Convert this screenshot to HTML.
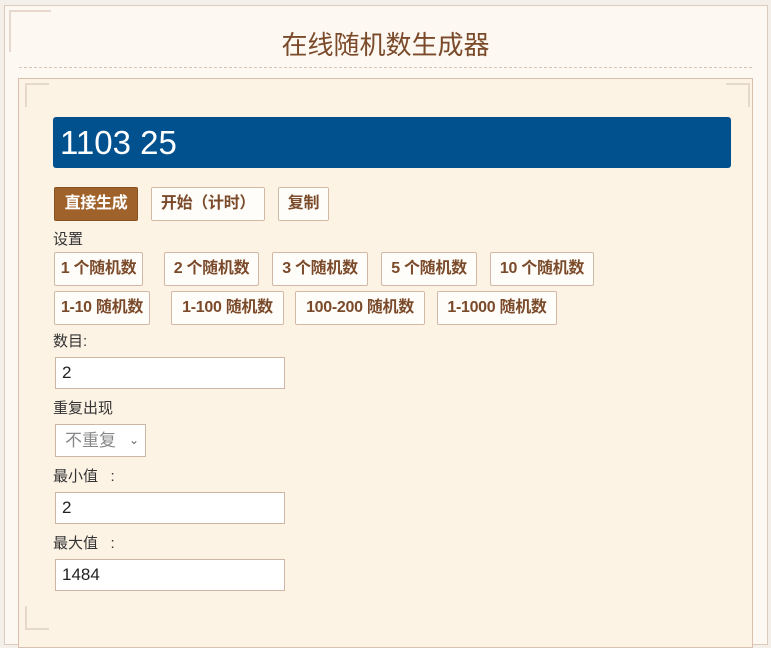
<!DOCTYPE html>
<html><head><meta charset="utf-8"><style>
*{box-sizing:border-box;margin:0;padding:0}
body{width:771px;height:638px;background:#f4efe9;font-family:"Liberation Sans","Noto Sans CJK SC",sans-serif;position:relative;overflow:hidden}
.outer{position:absolute;left:4px;top:5px;width:764px;height:640px;background:#fdf9f2;border:1px solid #dccbbd}
.title{position:absolute;left:0;top:25px;width:771px;text-align:center;font-size:26px;color:#7a4a2a}
.dash{position:absolute;left:19px;top:67px;width:733px;border-top:1px dashed #d8c6b6}
.inner{position:absolute;left:18px;top:78px;width:735px;height:570px;background:#fcf3e5;border:1px solid #d8bfae}
.bar{position:absolute;left:53px;top:117px;width:678px;height:51px;background:#02518f;border-radius:3px;color:#fff;font-size:33px;line-height:51px;padding-left:7px}
.b{position:absolute;height:34px;border:1px solid #d2b9a6;background:#fffdf9;color:#7a4a2a;font-weight:bold;font-size:16px;line-height:32px;text-align:center;border-radius:2px;white-space:nowrap;letter-spacing:-0.3px}
.lbl{position:absolute;left:53px;font-size:15px;color:#333}
.in{position:absolute;left:55px;width:230px;height:32px;background:#fff;border:1px solid #cdb6a4;font-size:17px;line-height:30px;padding-left:6px;color:#222}
.corner{position:absolute;width:24px;height:24px;border-left:2px solid #e6d8cc;border-top:2px solid #e6d8cc}
</style></head><body>
<div class="outer"></div>
<div class="corner" style="left:9px;top:10px;width:42px;height:42px"></div>
<div class="title">在线随机数生成器</div>
<div class="dash"></div>
<div class="inner"></div>
<div class="corner" style="left:25px;top:83px"></div>
<div class="corner" style="left:726px;top:83px;border-left:none;border-right:2px solid #e6d8cc"></div>
<div class="corner" style="left:25px;top:606px;border-top:none;border-bottom:2px solid #e6d8cc"></div>
<div class="bar">1103 25</div>
<div class="b" style="left:54px;top:187px;width:84px;background:#a0622b;color:#fff;border-color:#8a5020">直接生成</div>
<div class="b" style="left:151px;top:187px;width:114px">开始（计时）</div>
<div class="b" style="left:278px;top:187px;width:51px">复制</div>
<div class="lbl" style="top:228px">设置</div>
<div class="b" style="left:54px;top:252px;width:89px">1 个随机数</div>
<div class="b" style="left:164px;top:252px;width:95px">2 个随机数</div>
<div class="b" style="left:272px;top:252px;width:96px">3 个随机数</div>
<div class="b" style="left:381px;top:252px;width:96px">5 个随机数</div>
<div class="b" style="left:490px;top:252px;width:104px">10 个随机数</div>
<div class="b" style="left:54px;top:291px;width:96px">1-10 随机数</div>
<div class="b" style="left:171px;top:291px;width:113px">1-100 随机数</div>
<div class="b" style="left:295px;top:291px;width:130px">100-200 随机数</div>
<div class="b" style="left:437px;top:291px;width:120px">1-1000 随机数</div>
<div class="lbl" style="top:330px">数目:</div>
<div class="in" style="top:357px">2</div>
<div class="lbl" style="top:397px">重复出现</div>
<div style="position:absolute;left:55px;top:424px;width:91px;height:33px;background:#fff;border:1px solid #cdb6a4;font-size:17px;line-height:31px;padding-left:9px;color:#888">不重复<span style="position:absolute;right:6px;top:0;font-size:12px;color:#666">⌄</span></div>
<div class="lbl" style="top:465px">最小值 &nbsp;&nbsp;:</div>
<div class="in" style="top:492px">2</div>
<div class="lbl" style="top:532px">最大值 &nbsp;&nbsp;:</div>
<div class="in" style="top:559px">1484</div>
</body></html>
